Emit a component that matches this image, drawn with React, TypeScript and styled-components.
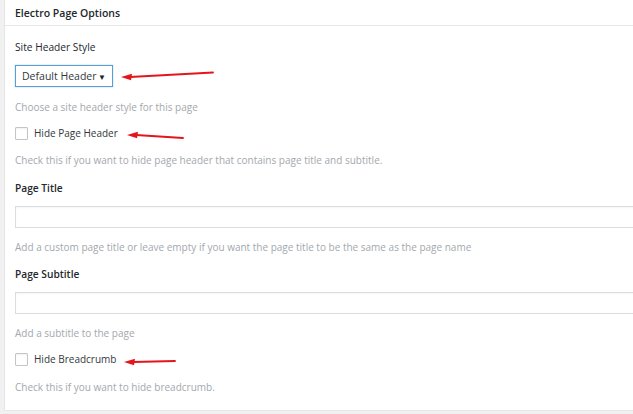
import React from 'react';
import styled, { createGlobalStyle } from 'styled-components';

const GlobalStyle = createGlobalStyle`
  html, body {
    margin: 0;
    padding: 0;
    background: #f1f1f1;
    overflow: hidden;
  }
  body {
    font-family: "Open Sans", "Noto Sans", sans-serif;
    color: #23282d;
  }
`;

const Panel = styled.div`
  margin-left: 4px;
  width: 720px;
  height: 410px;
  background: #fff;
  border-left: 1px solid #e5e5e5;
  border-bottom: 1px solid #e8e8e8;
`;

const PanelHeader = styled.div`
  height: 25px;
  display: flex;
  align-items: center;
  padding-left: 10px;
  border-bottom: 1px solid #e8e8e8;
  font-size: 10.5px;
  font-weight: 600;
  color: #23282d;
`;

const Body = styled.div`
  padding: 0 0 0 10px;
  display: flex;
  flex-direction: column;
`;

const Label = styled.div<{ $top: number; $bold?: boolean }>`
  margin-top: ${({ $top }) => $top}px;
  height: 16px;
  line-height: 16px;
  font-size: 10.2px;
  font-weight: ${({ $bold }) => ($bold ? 600 : 500)};
  color: #23282d;
`;

const Help = styled.div<{ $top: number }>`
  margin-top: ${({ $top }) => $top}px;
  height: 16px;
  line-height: 16px;
  font-size: 10px;
  color: #a3a8ad;
`;

const Row = styled.div<{ $top: number }>`
  margin-top: ${({ $top }) => $top}px;
  display: flex;
  align-items: center;
`;

const SelectBox = styled.div`
  box-sizing: border-box;
  width: 98px;
  height: 22px;
  display: flex;
  align-items: center;
  justify-content: space-between;
  padding: 0 6px 0 6px;
  border: 1px solid #5b9dd9;
  box-shadow: 0 0 1px rgba(30, 140, 190, 0.6);
  font-size: 10.5px;
  color: #32373c;
  background: #fff;
`;

const Caret = styled.span`
  font-size: 8px;
  color: #222;
`;

const TextInput = styled.div<{ $top: number }>`
  margin-top: ${({ $top }) => $top}px;
  box-sizing: border-box;
  height: 22px;
  width: 640px;
  border: 1px solid #dcdcdc;
  background: #fff;
  box-shadow: inset 0 1px 2px rgba(0, 0, 0, 0.04);
`;

const CheckRow = styled.div<{ $top: number }>`
  margin-top: ${({ $top }) => $top}px;
  height: 16px;
  display: flex;
  align-items: center;
  font-size: 10px;
  color: #32373c;
`;

const CheckBox = styled.span`
  box-sizing: border-box;
  width: 13px;
  height: 13px;
  border: 1px solid #c3c6c9;
  border-radius: 1px;
  background: #fff;
  margin-right: 6px;
  box-shadow: inset 0 1px 2px rgba(0, 0, 0, 0.06);
`;

const Arrow = styled.svg<{ $left: number }>`
  margin-left: ${({ $left }) => $left}px;
  align-self: flex-start;
  overflow: visible;
`;

type ArrowProps = { left: number; width: number; height: number; y1: number; y2: number };

const RedArrow: React.FC<ArrowProps> = ({ left, width, height, y1, y2 }) => (
  <Arrow $left={left} width={width} height={height} viewBox={`0 0 ${width} ${height}`}>
    <path
      d={`M9 ${y1} L${width} ${y2}`}
      stroke="#e3161b"
      strokeWidth="1.8"
      strokeLinecap="round"
      fill="none"
    />
    <path d={`M0 ${y1} L11 ${y1 - 3.2} L10 ${y1 + 3.2} Z`} fill="#e3161b" />
  </Arrow>
);

const App: React.FC = () => (
  <>
    <GlobalStyle />
    <Panel>
      <PanelHeader>Electro Page Options</PanelHeader>
      <Body>
        <Label $top={13}>Site Header Style</Label>
        <Row $top={10}>
          <SelectBox>
            Default Header
            <Caret>▼</Caret>
          </SelectBox>
          <RedArrow left={8} width={92} height={22} y1={12} y2={7.5} />
        </Row>
        <Help $top={12}>Choose a site header style for this page</Help>

        <CheckRow $top={10}>
          <CheckBox />
          Hide Page Header
          <RedArrow left={9} width={56} height={16} y1={10} y2={13} />
        </CheckRow>
        <Help $top={11}>Check this if you want to hide page header that contains page title and subtitle.</Help>

        <Label $top={12} $bold>Page Title</Label>
        <TextInput $top={10} />
        <Help $top={11}>Add a custom page title or leave empty if you want the page title to be the same as the page name</Help>

        <Label $top={11} $bold>Page Subtitle</Label>
        <TextInput $top={10} />
        <Help $top={11}>Add a subtitle to the page</Help>

        <CheckRow $top={10}>
          <CheckBox />
          Hide Breadcrumb
          <RedArrow left={8} width={51} height={16} y1={11} y2={10} />
        </CheckRow>
        <Help $top={12}>Check this if you want to hide breadcrumb.</Help>
      </Body>
    </Panel>
  </>
);

export default App;
